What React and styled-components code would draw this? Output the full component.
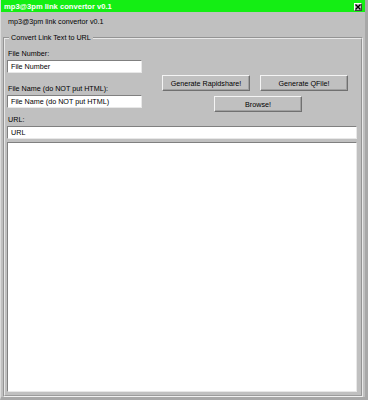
import React from 'react'
import styled, { createGlobalStyle } from 'styled-components'

const GlobalStyle = createGlobalStyle`
  html, body {
    margin: 0;
    padding: 0;
    background: #c0c0c0;
  }
  * {
    box-sizing: border-box;
  }
`

const Window = styled.div`
  width: 368px;
  height: 400px;
  display: flex;
  flex-direction: column;
  background: #c0c0c0;
  border-left: 1px solid #dcdcdc;
  border-right: 3px solid #a8a8a8;
  border-bottom: 3px solid #a8a8a8;
  font-family: "Liberation Sans", Arial, sans-serif;
  font-size: 7.2px;
  color: #000;
`

const TitleBar = styled.div`
  height: 12px;
  flex: none;
  display: flex;
  align-items: center;
  justify-content: space-between;
  padding: 0 3px 0 3px;
  background: #14ee14;
  color: #fff;
  font-weight: bold;
  font-size: 7.6px;
`

const CloseButton = styled.div`
  width: 8px;
  height: 8px;
  display: flex;
  align-items: center;
  justify-content: center;
  background: #c0c0c0;
  border-top: 1px solid #fff;
  border-left: 1px solid #fff;
  border-right: 1px solid #404040;
  border-bottom: 1px solid #404040;
  margin-top: 1px;
`

const AppLabel = styled.div`
  height: 20px;
  line-height: 20px;
  padding-left: 7px;
  flex: none;
`

const GroupBox = styled.fieldset`
  flex: 1;
  min-height: 0;
  margin: 0 2px 0 2px;
  padding: 4px 4px 3px 2px;
  border: 2px groove #e8e8e8;
  border-bottom-color: #f0f0f0;
  display: flex;
  flex-direction: column;
`

const Legend = styled.legend`
  padding: 0 2px;
  margin-left: 2px;
  line-height: 12px;
`

const TopSection = styled.div`
  display: flex;
  flex: none;
`

const LeftColumn = styled.div`
  width: 135px;
  display: flex;
  flex-direction: column;
`

const Label = styled.div`
  height: 12px;
  line-height: 12px;
  padding-left: 1px;
  margin-top: ${(p) => (p.$gap ? p.$gap : 0)}px;
`

const TextBox = styled.div`
  height: 13px;
  line-height: 11px;
  padding-left: 3px;
  background: #fff;
  border-top: 1px solid #808080;
  border-left: 1px solid #808080;
  border-right: 1px solid #e8e8e8;
  border-bottom: 1px solid #e8e8e8;
  white-space: nowrap;
  overflow: hidden;
`

const ButtonGrid = styled.div`
  display: grid;
  grid-template-columns: 88px 88px;
  column-gap: 10px;
  row-gap: 5px;
  padding-top: 27px;
  margin-left: 20px;
`

const Button = styled.div`
  height: 16px;
  display: flex;
  align-items: center;
  justify-content: center;
  background: #c0c0c0;
  border-top: 1px solid #f4f4f4;
  border-left: 1px solid #f4f4f4;
  border-right: 1px solid #707070;
  border-bottom: 1px solid #707070;
  box-shadow: inset -1px -1px 0 #a0a0a0;
  ${(p) =>
    p.$wide &&
    `
    grid-column: 1 / span 2;
    width: 88px;
    justify-self: center;
    margin-left: 6px;
  `}
`

const TextArea = styled.div`
  flex: 1;
  margin-top: 3px;
  background: #fff;
  border-top: 1px solid #808080;
  border-left: 1px solid #808080;
  border-right: 1px solid #e8e8e8;
  border-bottom: 1px solid #e8e8e8;
`

export default function App() {
  return (
    <>
      <GlobalStyle />
      <Window>
        <TitleBar>
          <span>mp3@3pm link convertor v0.1</span>
          <CloseButton>
            <svg width="6" height="6" viewBox="0 0 6 6">
              <path d="M0.5 0.5 L5.5 5.5 M5.5 0.5 L0.5 5.5" stroke="#000" strokeWidth="1.4" />
            </svg>
          </CloseButton>
        </TitleBar>
        <AppLabel>mp3@3pm link convertor v0.1</AppLabel>
        <GroupBox>
          <Legend>Convert Link Text to URL</Legend>
          <TopSection>
            <LeftColumn>
              <Label>File Number:</Label>
              <TextBox>File Number</TextBox>
              <Label $gap={10}>File Name (do NOT put HTML):</Label>
              <TextBox>File Name (do NOT put HTML)</TextBox>
            </LeftColumn>
            <ButtonGrid>
              <Button>Generate Rapidshare!</Button>
              <Button>Generate QFile!</Button>
              <Button $wide>Browse!</Button>
            </ButtonGrid>
          </TopSection>
          <Label $gap={2}>URL:</Label>
          <TextBox>URL</TextBox>
          <TextArea />
        </GroupBox>
      </Window>
    </>
  )
}
